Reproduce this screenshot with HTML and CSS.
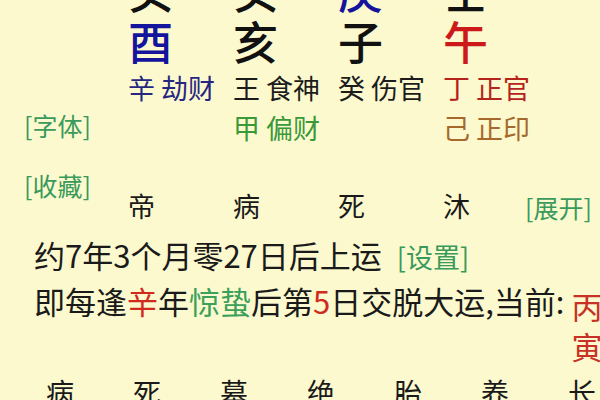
FILE: index.html
```html
<!DOCTYPE html>
<html lang="zh">
<head>
<meta charset="utf-8">
<link rel="stylesheet" href="styles.css">
</head>
<body>
<div class="page">
  <div class="chart">
    <div class="side">
      <span class="link font-link">[字体]</span>
      <span class="link fav-link">[收藏]</span>
    </div>
    <div class="col">
      <div class="gan water">癸</div>
      <div class="zhi metal">酉</div>
      <div class="hid metal-d">辛 劫财</div>
      <div class="hid"></div>
      <div class="cs">帝</div>
    </div>
    <div class="col">
      <div class="gan water">癸</div>
      <div class="zhi water">亥</div>
      <div class="hid water-d">王 食神</div>
      <div class="hid wood">甲 偏财</div>
      <div class="cs">病</div>
    </div>
    <div class="col">
      <div class="gan metal">庚</div>
      <div class="zhi water">子</div>
      <div class="hid water-d">癸 伤官</div>
      <div class="hid"></div>
      <div class="cs">死</div>
    </div>
    <div class="col">
      <div class="gan water">壬</div>
      <div class="zhi fire">午</div>
      <div class="hid fire-d">丁 正官</div>
      <div class="hid earth">己 正印</div>
      <div class="cs">沐</div>
    </div>
    <div class="more">
      <span class="link">[展开]</span>
    </div>
  </div>
  <div class="yun first">约7年3个月零27日后上运 <span class="link">[设置]</span></div>
  <div class="yun">即每逢<span class="red">辛</span>年<span class="green">惊蛰</span>后第<span class="red">5</span>日交脱大运,当前: <span class="cur"><span>丙</span><span>寅</span></span></div>
  <div class="cs-row">
    <span>病</span><span>死</span><span>墓</span><span>绝</span><span>胎</span><span>养</span><span>长</span>
  </div>
</div>
</body>
</html>
```
FILE: styles.css
```css
html, body {
  margin: 0;
  padding: 0;
  background: #fcf9cf;
  width: 600px;
  height: 400px;
  overflow: hidden;
}
.page {
  font-family: "Noto Sans CJK SC", "Noto Sans", sans-serif;
  color: #1a1a1a;
  margin-top: -37px;
}
.chart {
  display: grid;
  grid-template-columns: 128px 105px 105px 105px 82px 1fr;
}
.side {
  display: flex;
  flex-direction: column;
  padding-left: 24px;
  padding-top: 146px;
}
.link {
  color: #3a9a5c;
  font-size: 25px;
  line-height: 32px;
}
.fav-link {
  margin-top: 28px;
}
.col {
  display: flex;
  flex-direction: column;
}
.gan, .zhi {
  font-size: 45px;
  line-height: 54px;
  font-weight: 500;
}
.zhi { margin-top: -3px; }
.hid {
  font-size: 27px;
  line-height: 40px;
  min-height: 40px;
  white-space: nowrap;
}
.cs {
  font-size: 27px;
  line-height: 38px;
  margin-top: 39px;
}
.more {
  display: flex;
  align-items: flex-end;
  padding-bottom: 2px;
}
.water { color: #111111; }
.water-d { color: #1c1c1c; }
.metal { color: #14149c; }
.metal-d { color: #27277f; }
.fire { color: #cc1a1a; }
.fire-d { color: #b5241c; }
.wood { color: #3a9a3a; }
.earth { color: #a5692c; }
.yun {
  font-size: 31px;
  line-height: 46px;
  padding-left: 34px;
  white-space: nowrap;
}
.yun.first { margin-top: 7px; }
.yun .link { font-size: 27px; margin-left: 8px; }
.red { color: #d02a1e; }
.green { color: #3aa05a; }
.cur {
  display: inline-flex;
  flex-direction: column;
  vertical-align: top;
  color: #c83226;
  line-height: 40px;
  margin-top: 8px;
}
.cs-row {
  display: flex;
  padding-left: 46px;
  gap: 59px;
  font-size: 28px;
  line-height: 40px;
  margin-top: 6px;
}
```
